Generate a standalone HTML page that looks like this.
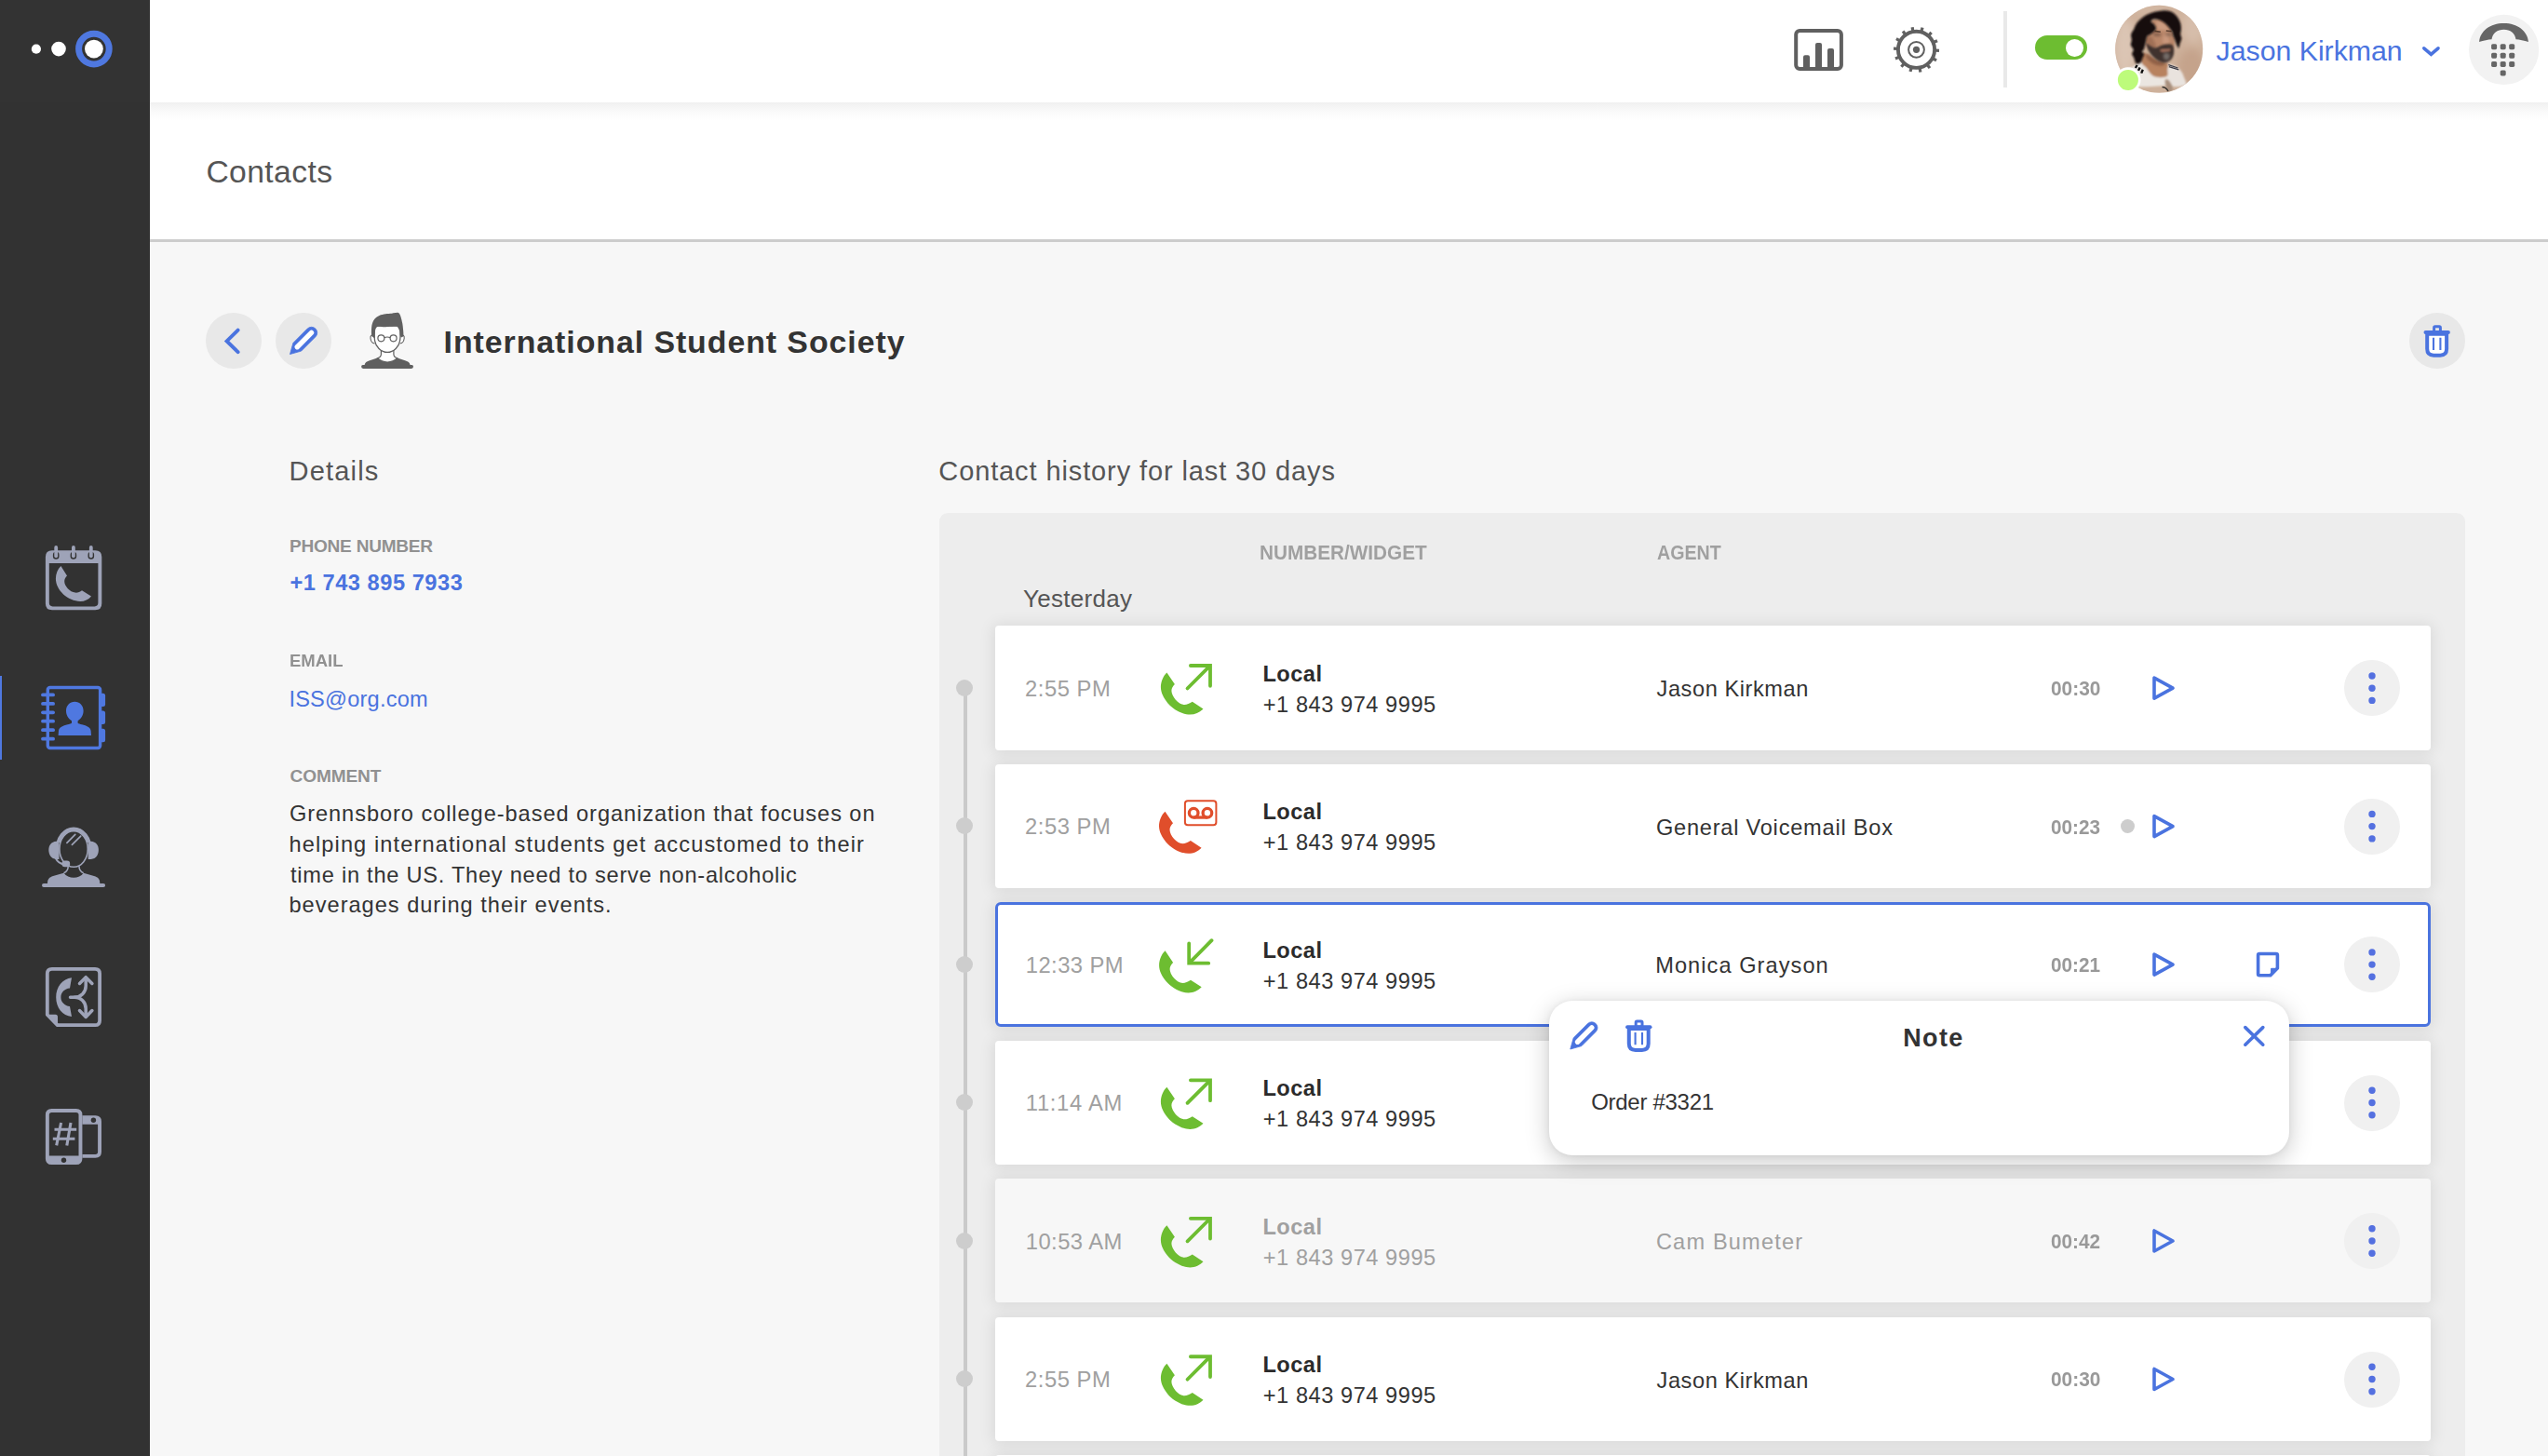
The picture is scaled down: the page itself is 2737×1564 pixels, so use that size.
<!DOCTYPE html>
<html lang="en"><head><meta charset="utf-8"><title>Contacts</title><style>
html,body{margin:0;padding:0}
html{width:2737px;height:1564px;overflow:hidden;background:#f7f7f7}
body{width:2737px;height:1564px;overflow:hidden;position:relative;background:#f7f7f7;font-family:"Liberation Sans",sans-serif}
#root{position:absolute;left:0;top:0;width:2737px;height:1564px;overflow:hidden;background:#f7f7f7}
.a{position:absolute;display:block}
.t{position:absolute;white-space:nowrap;line-height:1}
.cbtn{width:60px;height:60px;border-radius:50%;background:#e8e8e8}
.more{width:60px;height:60px;border-radius:50%;background:#f0f0f0}
.card{background:#fff;border-radius:4px;box-shadow:0 1px 16px 3px rgba(0,0,0,.08)}
.card.sel{box-sizing:border-box;border:3px solid #4a73df;border-radius:6px}
.card.dis{background:#f7f7f7}
</style></head><body><div id="root">
<div class="a" style="left:0;top:0;width:161px;height:1564px;background:#333"></div>
<div class="a" style="left:0;top:110px;width:161px;height:1454px;background:#323232"></div>
<svg class="a" style="left:20px;top:20px" width="120" height="66" viewBox="20 20 120 66" ><circle cx="38.9" cy="52.7" r="5.1" fill="#fff"/><circle cx="63" cy="52.6" r="7.8" fill="#fff"/><circle cx="100.9" cy="52.6" r="16.3" fill="none" stroke="#4f78e0" stroke-width="7"/><circle cx="100.9" cy="52.6" r="9.9" fill="#fff"/></svg>
<div class="a" style="left:0;top:726px;width:2px;height:90px;background:#4f78e0"></div>
<svg class="a" style="left:40px;top:580px" width="80" height="80" viewBox="40 580 80 80" ><g fill="#9ea3b8"><path fill-rule="evenodd" d="M56,591.3 L102.3,591.3 Q109.3,591.3 109.3,598.3 L109.3,648.2 Q109.3,655.2 102.3,655.2 L56,655.2 Q48.9,655.2 48.9,648.2 L48.9,598.3 Q48.9,591.3 56,591.3 Z M52.8,605 L52.8,647.6 Q52.8,651.4 56.6,651.4 L101.6,651.4 Q105.4,651.4 105.4,647.6 L105.4,605 Z"/><path d="M65.4,608.1 C62,611.5 59.9,616.5 59.9,621.5 C59.9,634 73,645.9 86.3,645.9 C91,645.9 95,644 98,640.4 L88,634.2 C86,635.8 83.5,636.8 80.8,636.6 C75,636 69.2,629.5 69.2,624.5 C69.2,622 70.3,620.2 72,618.4 Z"/></g><path d="M60.2,596 L60.2,597.5" stroke="#333" stroke-width="6.6" stroke-linecap="round" fill="none"/><path d="M60.2,588 L60.2,597.3" stroke="#9ea3b8" stroke-width="3.8" stroke-linecap="round" fill="none"/><path d="M78.9,596 L78.9,597.5" stroke="#333" stroke-width="6.6" stroke-linecap="round" fill="none"/><path d="M78.9,588 L78.9,597.3" stroke="#9ea3b8" stroke-width="3.8" stroke-linecap="round" fill="none"/><path d="M97.8,596 L97.8,597.5" stroke="#333" stroke-width="6.6" stroke-linecap="round" fill="none"/><path d="M97.8,588 L97.8,597.3" stroke="#9ea3b8" stroke-width="3.8" stroke-linecap="round" fill="none"/></svg>
<svg class="a" style="left:40px;top:730px" width="80" height="80" viewBox="40 730 80 80" ><rect x="51.3" y="738.5" width="56.3" height="65" rx="2.5" fill="none" stroke="#4f78e0" stroke-width="3.4"/><path d="M46,746.4 L57.1,746.4" stroke="#4f78e0" stroke-width="3.8" stroke-linecap="round"/><path d="M46,755.9 L57.1,755.9" stroke="#4f78e0" stroke-width="3.8" stroke-linecap="round"/><path d="M46,765.3 L57.1,765.3" stroke="#4f78e0" stroke-width="3.8" stroke-linecap="round"/><path d="M46,774.7 L57.1,774.7" stroke="#4f78e0" stroke-width="3.8" stroke-linecap="round"/><path d="M46,784.2 L57.1,784.2" stroke="#4f78e0" stroke-width="3.8" stroke-linecap="round"/><path d="M46,793.7 L57.1,793.7" stroke="#4f78e0" stroke-width="3.8" stroke-linecap="round"/><path d="M109,744.7 L110.6,744.7 Q113.1,744.7 113.1,747.2 L113.1,756.6 Q113.1,759.1 110.6,759.1 L109,759.1 Z" fill="#4f78e0"/><path d="M109,763.6 L110.6,763.6 Q113.1,763.6 113.1,766.1 L113.1,775.5 Q113.1,778.0 110.6,778.0 L109,778.0 Z" fill="#4f78e0"/><path d="M109,782.8 L110.6,782.8 Q113.1,782.8 113.1,785.3 L113.1,794.6999999999999 Q113.1,797.1999999999999 110.6,797.1999999999999 L109,797.1999999999999 Z" fill="#4f78e0"/><path fill="#4f78e0" d="M80.3,753.8 C85.5,753.8 89.6,758 89.6,763.5 C89.6,768 87.3,772 83.6,774.3 L83.6,776.8 C84.5,777.5 86,777.9 88,778.3 C93,779.4 97.2,781.5 97.6,785 L98,790 L62.6,790 L63,785 C63.4,781.5 67.6,779.4 72.6,778.3 C74.6,777.9 76.1,777.5 77,776.8 L77,774.3 C73.3,772 71,768 71,763.5 C71,758 75.1,753.8 80.3,753.8 Z"/></svg>
<svg class="a" style="left:40px;top:880px" width="80" height="80" viewBox="40 880 80 80" ><g fill="#9ea3b8"><path d="M45,951 Q45,949 47,949 L51,949 C51,944 53,942.5 57,941 L68.5,937.7 C71,941 75,942.8 79.1,942.8 C83.2,942.8 87.5,941 89.7,937.7 L101,941 C105.5,942.5 107.3,944 107.3,949 L111,949 Q113.1,949 113.1,951 Q113.1,953.1 111,953.1 L47,953.1 Q45,953.1 45,951 Z"/><path d="M52.3,913 C52.3,908 55,904 60.5,903.7 L63.5,903.7 L63.5,922.9 L60.5,922.9 C55,922.5 52.3,918 52.3,913 Z"/><path d="M105.9,913 C105.9,908 103.2,904 97.7,903.7 L94.7,903.7 L94.7,922.9 L97.7,922.9 C103.2,922.5 105.9,918 105.9,913 Z"/><rect x="66.4" y="924.6" width="8.8" height="6.6" rx="3.3"/></g><g fill="none" stroke="#9ea3b8"><clipPath id="hb"><rect x="40" y="880" width="80" height="25"/></clipPath><ellipse cx="79.1" cy="912" rx="17.3" ry="21.4" stroke-width="4.4" clip-path="url(#hb)"/><ellipse cx="79.1" cy="912" rx="15.2" ry="19.3" stroke-width="1.6"/><path d="M59.5,921.5 C61.5,925.5 64.5,928 69,928.5" stroke-width="1.8"/><path d="M73.2,930.5 C73.2,934 71.5,936.5 68.5,937.7 M85,930.5 C85,934 86.7,936.5 89.7,937.7" stroke-width="1.6"/><path d="M71.9,905.4 L80.8,896.4 M77.4,907.4 L86.7,898.2" stroke-width="1.7" stroke-linecap="round"/></g></svg>
<svg class="a" style="left:40px;top:1030px" width="80" height="80" viewBox="40 1030 80 80" ><path d="M55.8,1040.8 L102.1,1040.8 Q107.1,1040.8 107.1,1045.8 L107.1,1096.2 Q107.1,1101.2 102.1,1101.2 L61.7,1101.2 L50.8,1090 L50.8,1045.8 Q50.8,1040.8 55.8,1040.8 Z" fill="none" stroke="#9ea3b8" stroke-width="3.8" stroke-linejoin="round"/><path d="M51.5,1089.7 L59.5,1089.7 Q62,1089.7 62,1092.2 L62,1100.8 Z" fill="#9ea3b8"/><path fill="#9ea3b8" d="M77,1050.2 C67,1051.5 60.2,1060 60.2,1071.2 C60.2,1082.4 67,1090.8 77,1092.1 L75,1081.1 C69.5,1080.2 65.4,1076.5 65.4,1071.2 C65.4,1065.9 69.5,1062.2 75,1061.6 Z"/><g fill="none" stroke="#9ea3b8" stroke-width="3.5" stroke-linecap="round" stroke-linejoin="round"><path d="M75.5,1071.2 L80,1071.2 C87,1071.2 92.2,1066 92.2,1059 L92.2,1051.5"/><path d="M80,1071.2 C87,1071.2 92.2,1076.4 92.2,1083.4 L92.2,1091"/><path d="M85.5,1056.4 L92.2,1049.7 L98.9,1056.4"/><path d="M85.5,1085.6 L92.2,1092.4 L98.9,1085.6"/></g></svg>
<svg class="a" style="left:40px;top:1185px" width="80" height="80" viewBox="40 1185 80 80" ><g fill="#9ea3b8"><path fill-rule="evenodd" d="M55.5,1190.9 L81.8,1190.9 Q88.4,1190.9 88.4,1197.5 L88.4,1244.4 Q88.4,1251 81.8,1251 L55.5,1251 Q48.9,1251 48.9,1244.4 L48.9,1197.5 Q48.9,1190.9 55.5,1190.9 Z M52.8,1197.6 L52.8,1241.4 L84.5,1241.4 L84.5,1197.6 Q84.5,1194.9 81.8,1194.9 L55.5,1194.9 Q52.8,1194.9 52.8,1197.6 Z"/><path fill-rule="evenodd" d="M88.4,1198.2 L102.5,1198.2 Q109,1198.2 109,1204.7 L109,1237.3 Q109,1243.8 102.5,1243.8 L88.4,1243.8 L88.4,1240 L102.4,1240 Q105.1,1240 105.1,1237.3 L105.1,1207.8 L88.4,1207.8 Z"/></g><circle cx="68.5" cy="1246.2" r="2.7" fill="#323232"/><circle cx="100.4" cy="1203.3" r="2.7" fill="#323232"/><g stroke="#9ea3b8" stroke-width="3.1" fill="none"><path d="M65.6,1206 L60.7,1230.4 M76,1206 L71.8,1230.4 M58.5,1213.3 L82.2,1213.3 M56.8,1223.2 L80.4,1223.2"/></g></svg>
<div class="a" style="left:161px;top:0;width:2576px;height:110px;background:#fff"></div>
<div class="a" style="left:161px;top:110px;width:2576px;height:147px;background:linear-gradient(#f0f0f0 0px,#f5f5f5 5px,#fbfbfb 11px,#fff 19px)"></div>
<div class="a" style="left:161px;top:257px;width:2576px;height:2.5px;background:#cdcdcd"></div>
<svg class="a" style="left:1920px;top:25px" width="70" height="60" viewBox="1920 25 70 60" ><rect x="1929.2" y="32.9" width="48.7" height="41.2" rx="4" fill="none" stroke="#606060" stroke-width="4"/><g fill="#606060"><path d="M1937,72.5 L1937,61.2 Q1937,59.2 1939,59.2 L1942,59.2 Q1944,59.2 1944,61.2 L1944,72.5 Z"/><path d="M1950,72.5 L1950,48.1 Q1950,46.1 1952,46.1 L1955,46.1 Q1957,46.1 1957,48.1 L1957,72.5 Z"/><path d="M1963,72.5 L1963,53.9 Q1963,51.9 1965,51.9 L1968,51.9 Q1970,51.9 1970,53.9 L1970,72.5 Z"/></g></svg>
<svg class="a" style="left:2030px;top:25px" width="60" height="60" viewBox="2030 25 60 60" ><g fill="none" stroke="#606060"><circle cx="2058.5" cy="53.3" r="19.6" stroke-width="3.9"/><g stroke-width="3.2"><path d="M2078.98,54.22 L2082.98,54.40"/><path d="M2076.55,63.02 L2080.07,64.91"/><path d="M2070.55,69.89 L2072.90,73.12"/><path d="M2062.16,73.47 L2062.87,77.41"/><path d="M2053.04,73.06 L2051.98,76.92"/><path d="M2045.01,68.74 L2042.38,71.75"/><path d="M2039.65,61.35 L2035.97,62.93"/><path d="M2038.02,52.38 L2034.02,52.20"/><path d="M2040.45,43.58 L2036.93,41.69"/><path d="M2046.45,36.71 L2044.10,33.48"/><path d="M2054.84,33.13 L2054.13,29.19"/><path d="M2063.96,33.54 L2065.02,29.68"/><path d="M2071.99,37.86 L2074.62,34.85"/><path d="M2077.35,45.25 L2081.03,43.67"/></g><circle cx="2058.5" cy="53.3" r="8.4" stroke-width="2"/></g><circle cx="2058.5" cy="53.3" r="3.6" fill="#606060"/></svg>
<div class="a" style="left:2152px;top:12px;width:4px;height:82px;background:#e9e9e9"></div>
<div class="a" style="left:2186px;top:38px;width:56px;height:26.4px;border-radius:14px;background:#6dbd31"></div><div class="a" style="left:2219.1px;top:41.9px;width:18.8px;height:18.8px;border-radius:50%;background:#fff"></div>
<svg class="a" style="left:2265px;top:0px" width="110" height="110" viewBox="2265 0 110 110" ><defs><clipPath id="avc"><circle cx="2319.2" cy="52.8" r="47"/></clipPath><filter id="b1" x="-20%" y="-20%" width="140%" height="140%"><feGaussianBlur stdDeviation="0.9"/></filter><filter id="b2" x="-20%" y="-20%" width="140%" height="140%"><feGaussianBlur stdDeviation="0.7"/></filter><filter id="b4" x="-30%" y="-30%" width="160%" height="160%"><feGaussianBlur stdDeviation="1.8"/></filter><filter id="b3" x="-30%" y="-30%" width="160%" height="160%"><feGaussianBlur stdDeviation="4"/></filter></defs><g clip-path="url(#avc)"><rect x="2270" y="4" width="98" height="98" fill="#ceb19b"/><g filter="url(#b3)"><ellipse cx="2283" cy="50" rx="12" ry="30" fill="#dbc5b4"/><ellipse cx="2356" cy="28" rx="12" ry="18" fill="#d6bdaa"/><ellipse cx="2354" cy="72" rx="14" ry="20" fill="#c5a38b"/><ellipse cx="2310" cy="10" rx="20" ry="6" fill="#d2b7a3"/></g><g filter="url(#b1)"><path d="M2291.2,71.5 C2295.2,69.7 2297.3,66.7 2298.9,66.0 C2300.6,65.4 2299.7,66.5 2301.1,67.7 C2302.5,68.9 2305.5,71.4 2307.6,73.0 C2309.7,74.6 2311.8,75.8 2313.8,77.3 C2315.8,78.8 2317.4,81.3 2319.6,82.1 C2321.9,82.9 2326.2,80.5 2327.3,82.1 C2328.4,83.7 2335.0,90.1 2326.3,91.7 C2317.7,93.3 2283.9,94.1 2275.4,91.7 C2266.9,89.3 2272.7,80.7 2275.4,77.3 C2278.0,73.9 2287.3,73.4 2291.2,71.5 Z" fill="#ebe6e1"/><path d="M2329.0,68.9 C2329.8,68.3 2331.5,69.6 2333.1,70.1 C2334.6,70.6 2336.8,71.0 2338.4,72.0 C2340.0,73.1 2341.5,74.7 2342.7,76.3 C2343.9,78.0 2344.9,79.6 2345.6,82.1 C2346.3,84.7 2350.2,90.1 2347.0,91.7 C2343.8,93.3 2329.6,93.7 2326.3,91.7 C2323.1,89.7 2327.0,82.7 2327.3,79.7 C2327.6,76.7 2328.0,75.7 2328.3,73.9 C2328.5,72.1 2328.2,69.5 2329.0,68.9 Z" fill="#e9e3de"/><path d="M2300.9,57.6 C2301.9,56.1 2304.8,57.4 2306.6,58.1 C2308.5,58.8 2309.9,60.6 2311.9,61.9 C2313.9,63.2 2316.2,64.8 2318.7,65.8 C2321.1,66.7 2324.6,67.1 2326.3,67.7 C2328.1,68.3 2328.9,68.1 2329.2,69.1 C2329.6,70.2 2328.6,71.8 2328.3,73.9 C2327.9,76.1 2329.7,80.8 2327.3,82.1 C2324.9,83.5 2317.5,83.7 2313.8,82.1 C2310.2,80.5 2307.4,75.0 2305.2,72.5 C2302.9,70.0 2301.1,69.7 2300.4,67.2 C2299.7,64.7 2299.8,59.1 2300.9,57.6 Z" fill="#b8825f"/></g><g filter="url(#b4)"><path d="M2305.2,58.1 C2306.0,57.8 2309.7,60.6 2311.9,61.9 C2314.2,63.2 2316.2,64.8 2318.7,65.8 C2321.1,66.7 2325.9,66.9 2326.3,67.7 C2326.8,68.5 2323.6,70.4 2321.5,70.6 C2319.5,70.7 2316.2,69.8 2313.8,68.7 C2311.4,67.5 2308.6,65.6 2307.1,63.8 C2305.7,62.1 2304.4,58.4 2305.2,58.1 Z" fill="#8d5d45"/></g><g filter="url(#b1)"><path d="M2311.0,22.5 C2311.9,21.7 2316.2,20.5 2318.7,20.8 C2321.1,21.1 2323.9,22.7 2325.9,24.2 C2327.9,25.7 2329.3,27.8 2330.7,30.0 C2332.0,32.1 2333.1,34.6 2334.0,36.9 C2335.0,39.2 2336.0,41.6 2336.2,43.7 C2336.4,45.7 2335.8,47.8 2335.2,49.4 C2334.7,51.0 2335.8,52.5 2333.1,53.3 C2330.3,54.1 2323.1,55.0 2318.7,54.2 C2314.2,53.4 2308.9,50.6 2306.6,48.5 C2304.4,46.3 2305.0,43.2 2305.2,41.2 C2305.4,39.3 2306.6,38.3 2308.1,36.9 C2309.5,35.6 2312.5,34.4 2313.8,33.1 C2315.2,31.8 2316.2,30.5 2316.0,29.2 C2315.8,27.9 2313.7,26.5 2312.9,25.4 C2312.0,24.3 2310.0,23.3 2311.0,22.5 Z" fill="#b98669"/></g><g filter="url(#b4)"><path d="M2315.8,23.0 C2316.6,22.3 2319.6,22.3 2321.5,23.0 C2323.5,23.7 2325.9,25.7 2327.3,27.3 C2328.8,28.9 2330.8,31.7 2330.2,32.6 C2329.6,33.5 2325.5,32.8 2323.5,32.6 C2321.4,32.4 2318.8,32.0 2317.7,31.2 C2316.6,30.3 2317.1,28.7 2316.7,27.3 C2316.4,25.9 2315.0,23.7 2315.8,23.0 Z" fill="#cb9b80"/><path d="M2324.9,36.9 C2325.7,35.6 2326.9,35.8 2327.8,36.9 C2328.7,38.0 2330.0,42.0 2330.2,43.7 C2330.4,45.3 2330.2,46.5 2329.2,47.0 C2328.3,47.6 2325.5,47.4 2324.4,47.0 C2323.4,46.6 2322.9,46.3 2323.0,44.6 C2323.1,42.9 2324.1,38.2 2324.9,36.9 Z" fill="#c9977c"/><path d="M2305.7,40.8 C2306.2,39.0 2308.6,38.4 2310.0,38.8 C2311.4,39.3 2312.9,41.9 2313.8,43.7 C2314.8,45.4 2316.1,47.8 2315.8,49.4 C2315.4,51.0 2313.4,53.3 2311.9,53.3 C2310.4,53.3 2307.7,51.5 2306.6,49.4 C2305.6,47.3 2305.1,42.5 2305.7,40.8 Z" fill="#a07057"/><path d="M2313.4,35.5 C2314.1,35.0 2316.3,34.9 2317.7,35.0 C2319.1,35.1 2321.1,35.6 2321.5,36.2 C2322.0,36.8 2321.5,38.4 2320.6,38.8 C2319.6,39.3 2317.0,39.2 2315.8,39.1 C2314.5,38.9 2313.5,38.5 2313.1,37.9 C2312.7,37.3 2312.6,36.0 2313.4,35.5 Z" fill="#8a6350"/><path d="M2326.3,36.0 C2327.0,35.4 2329.0,35.0 2330.2,35.0 C2331.4,35.0 2333.1,35.6 2333.6,36.2 C2334.0,36.8 2334.0,38.4 2333.1,38.8 C2332.2,39.3 2329.4,39.2 2328.3,39.1 C2327.1,39.0 2326.4,38.6 2326.1,38.1 C2325.8,37.6 2325.7,36.5 2326.3,36.0 Z" fill="#94705c"/></g><g filter="url(#b1)"><path d="M2305.7,46.5 C2306.1,45.8 2308.5,48.6 2310.0,49.4 C2311.5,50.2 2313.4,51.2 2314.8,51.3 C2316.2,51.5 2316.9,50.9 2318.2,50.4 C2319.5,49.9 2320.8,48.9 2322.5,48.5 C2324.2,48.0 2326.5,47.6 2328.3,47.5 C2330.0,47.4 2332.0,47.3 2333.1,48.0 C2334.2,48.6 2334.4,50.0 2334.8,51.3 C2335.1,52.7 2335.4,54.6 2335.2,56.2 C2335.1,57.8 2334.7,59.5 2334.0,61.0 C2333.4,62.4 2332.3,63.8 2331.2,64.8 C2330.0,65.8 2328.8,66.6 2327.3,67.0 C2325.9,67.3 2324.3,67.4 2322.5,67.0 C2320.7,66.5 2318.6,65.6 2316.7,64.3 C2314.9,63.1 2313.0,61.3 2311.4,59.5 C2309.9,57.8 2308.6,55.9 2307.6,53.8 C2306.6,51.6 2305.3,47.3 2305.7,46.5 Z" fill="#3f332d"/><path d="M2320.3,53.5 C2320.9,53.0 2324.0,52.9 2325.9,52.8 C2327.7,52.6 2330.8,52.2 2331.4,52.5 C2332.0,52.9 2331.2,54.4 2329.7,55.0 C2328.2,55.5 2324.1,55.9 2322.5,55.7 C2320.9,55.4 2319.8,54.0 2320.3,53.5 Z" fill="#a46f5b"/></g><g filter="url(#b4)"><path d="M2324.4,57.6 C2325.1,56.8 2327.2,56.6 2328.3,56.9 C2329.3,57.1 2330.4,58.0 2330.7,59.0 C2330.9,60.1 2330.5,62.5 2329.7,63.4 C2328.9,64.2 2326.8,64.6 2325.9,64.3 C2324.9,64.0 2324.2,62.6 2323.9,61.4 C2323.7,60.3 2323.7,58.4 2324.4,57.6 Z" fill="#746c67"/></g><g filter="url(#b1)"><path d="M2294.6,68.2 C2293.4,67.3 2293.0,63.6 2292.2,61.9 C2291.5,60.2 2290.1,59.5 2290.0,58.1 C2290.0,56.6 2291.9,54.9 2291.7,53.3 C2291.5,51.7 2289.2,50.2 2288.8,48.5 C2288.5,46.7 2289.8,44.6 2289.8,42.7 C2289.8,40.8 2288.7,38.8 2289.1,36.9 C2289.5,35.0 2291.3,33.0 2292.2,31.2 C2293.1,29.3 2293.4,27.6 2294.6,25.9 C2295.8,24.1 2297.7,22.2 2299.4,20.6 C2301.2,19.0 2303.1,17.5 2305.2,16.2 C2307.3,15.0 2309.7,14.1 2311.9,13.4 C2314.2,12.6 2316.3,12.3 2318.7,11.9 C2321.0,11.6 2323.5,11.2 2325.9,11.3 C2328.3,11.5 2331.2,12.1 2333.1,12.9 C2335.0,13.7 2336.0,15.0 2337.2,16.2 C2338.4,17.5 2339.4,19.0 2340.3,20.6 C2341.2,22.2 2342.0,24.0 2342.5,25.9 C2342.9,27.7 2343.0,29.8 2342.9,31.6 C2342.9,33.5 2342.1,35.3 2342.2,36.9 C2342.3,38.5 2343.5,39.6 2343.4,41.2 C2343.3,42.9 2342.3,44.8 2341.7,46.5 C2341.2,48.3 2340.9,51.4 2340.3,51.6 C2339.6,51.7 2338.6,49.0 2337.9,47.5 C2337.2,46.0 2336.8,44.1 2336.2,42.7 C2335.6,41.2 2335.0,40.3 2334.5,38.8 C2334.0,37.4 2333.9,35.6 2333.1,34.0 C2332.3,32.4 2331.1,30.8 2329.7,29.2 C2328.3,27.6 2326.6,25.7 2324.9,24.4 C2323.2,23.1 2321.5,22.2 2319.6,21.5 C2317.8,20.9 2315.4,20.3 2313.8,20.6 C2312.3,20.8 2310.5,22.1 2310.5,23.0 C2310.5,23.9 2312.9,24.7 2313.8,25.9 C2314.8,27.1 2316.0,28.8 2316.0,30.2 C2316.0,31.6 2314.8,32.9 2313.8,34.0 C2312.8,35.2 2311.2,36.1 2310.0,36.9 C2308.8,37.7 2307.4,37.7 2306.6,38.8 C2305.8,40.0 2305.6,42.1 2305.2,43.7 C2304.8,45.3 2304.6,46.9 2304.2,48.5 C2303.8,50.1 2303.3,52.1 2302.8,53.3 C2302.2,54.5 2300.8,54.9 2300.9,55.7 C2300.9,56.5 2303.2,56.9 2303.3,58.1 C2303.3,59.3 2302.0,61.4 2301.3,62.9 C2300.7,64.4 2300.5,66.3 2299.4,67.2 C2298.3,68.1 2295.8,69.1 2294.6,68.2 Z" fill="#18100e"/><path d="M2325.8,86.3 C2326.2,84.9 2327.9,85.1 2329.1,85.9 C2330.2,86.7 2331.9,89.2 2332.7,91.0 C2333.5,92.8 2334.3,95.5 2333.8,96.8 C2333.3,98.2 2330.9,99.5 2329.8,99.0 C2328.6,98.5 2327.5,96.0 2326.9,93.9 C2326.2,91.8 2325.4,87.6 2325.8,86.3 Z" fill="#a88f7d"/></g><g filter="url(#b2)" fill="none"><path d="M2314.5,33.4 L2320.8,34.2 M2326.8,33 L2332.6,33.8" stroke="#3a261e" stroke-width="1.6" opacity="0.75"/><path d="M2295.6,70 L2293.9,73 M2298.6,72.4 L2297,75.8 M2301.8,74.8 L2300.2,78.6" stroke="#0c0c0c" stroke-width="2.4"/><path d="M2329.4,69.6 L2339.5,73 M2329.8,71.6 L2340.3,74.9" stroke="#3c3c46" stroke-width="1.2"/><path d="M2322.5,93.5 C2325,93.5 2327.5,95 2329,98" stroke="#3a3530" stroke-width="1.6"/></g></g><circle cx="2285.9" cy="85.9" r="13.6" fill="#fff"/><circle cx="2285.9" cy="85.9" r="11" fill="#bdfb7b"/></svg>
<svg class="a" style="left:2595px;top:40px" width="32" height="28" viewBox="2595 40 32 28" ><path d="M2603.8,51.8 L2611.4,58.4 L2619,51.8" fill="none" stroke="#4a73df" stroke-width="3.6" stroke-linecap="round" stroke-linejoin="miter"/></svg>
<svg class="a" style="left:2650px;top:14px" width="80" height="80" viewBox="2650 14 80 80" ><circle cx="2689.6" cy="53.4" r="37.6" fill="#f2f2f2"/><g fill="#666"><path d="M2663.1,45.1 C2664,33 2675,24.9 2689.6,24.9 C2704,24.9 2715,33 2716,45.1 C2711,43.5 2706.5,42.5 2702.5,42.3 C2701.5,35.5 2696.5,31.7 2689.6,31.7 C2682.5,31.7 2677.5,35.5 2676.5,42.3 C2672.5,42.5 2668,43.5 2663.1,45.1 Z"/><rect x="2676.1" y="47.2" width="6" height="6" rx="1.6"/><rect x="2676.1" y="56.7" width="6" height="6" rx="1.6"/><rect x="2676.1" y="65.9" width="6" height="6" rx="1.6"/><rect x="2685.7" y="47.2" width="6" height="6" rx="1.6"/><rect x="2685.7" y="56.7" width="6" height="6" rx="1.6"/><rect x="2685.7" y="65.9" width="6" height="6" rx="1.6"/><rect x="2695.2" y="47.2" width="6" height="6" rx="1.6"/><rect x="2695.2" y="56.7" width="6" height="6" rx="1.6"/><rect x="2695.2" y="65.9" width="6" height="6" rx="1.6"/><rect x="2685.7" y="75.4" width="6" height="6" rx="1.6"/></g></svg>
<div class="a cbtn" style="left:221px;top:336px"></div><div class="a cbtn" style="left:296px;top:336px"></div><div class="a cbtn" style="left:2588px;top:336px"></div>
<svg class="a" style="left:236px;top:346px" width="30" height="40" viewBox="236 346 30 40" ><path d="M255.6,354.6 L243.6,366.4 L255.6,378.2" fill="none" stroke="#4a73df" stroke-width="3.9" stroke-linecap="round" stroke-linejoin="miter"/></svg>
<svg class="a" style="left:300px;top:340px" width="52" height="52" viewBox="300 340 52 52" ><g transform="translate(326 366)"><path d="M-14.50,14.50 L-11.10,2.40 L4.20,-12.90 A6.15,6.15 0 0 1 12.90,-4.20 L-2.40,11.10 Z" fill="#4a73df" stroke="#4a73df" stroke-width="0.8" stroke-linejoin="round"/><path d="M8.55,-8.55 L-6.75,6.75" stroke="#fff" stroke-width="5.4" stroke-linecap="round" fill="none"/></g></svg>
<svg class="a" style="left:2598px;top:340px" width="40" height="52" viewBox="2598 340 40 52" ><g transform="translate(0 0)" fill="none" stroke="#4a73df"><rect x="2614.6" y="350.8" width="6.8" height="6" rx="1.2" stroke-width="3"/><path d="M2607.2,358.8 L2607.2,374.8 Q2607.2,381.7 2614.2,381.7 L2621.2,381.7 Q2628.1,381.7 2628.1,374.8 L2628.1,358.8 Z" fill="#fff" stroke-width="4"/><path d="M2605.5,357 L2629.9,357" stroke-width="4" stroke-linecap="round"/><path d="M2614,362.8 L2614,376 M2621.4,362.8 L2621.4,376" stroke-width="2.1"/></g></svg>
<svg class="a" style="left:384px;top:332px" width="64" height="68" viewBox="384 332 64 68" ><g fill="#606060"><path d="M388.1,393.8 Q388.1,392.2 389.8,392.1 L391.6,392 C392.2,389.5 393.8,388.4 396.4,387.6 L407.6,383.8 L424.6,383.8 L435.8,387.6 C438.4,388.4 440,389.5 440.6,392 L442.4,392.1 Q444,392.2 444,393.8 Q444,395.9 442,395.9 L390.1,395.9 Q388.1,395.9 388.1,393.8 Z"/></g><path d="M409.4,376 L409.4,380.5 C409.4,382.6 408,384 405.6,384.8 C408.5,387.6 412,389 416.1,389 C420.2,389 423.8,387.6 426.7,384.8 C424.3,384 422.9,382.6 422.9,380.5 L422.9,376 Z" fill="#fff" stroke="#606060" stroke-width="1.2"/><path d="M402.2,360.4 C399.5,359 397.6,360.5 398,363.5 C398.4,366.5 400,368.8 402.6,369" fill="#fff" stroke="#606060" stroke-width="1.1"/><path d="M430,360.4 C432.7,359 434.6,360.5 434.2,363.5 C433.8,366.5 432.2,368.8 429.6,369" fill="#fff" stroke="#606060" stroke-width="1.1"/><path d="M402.4,350 C402,356 402,362 402.6,366 C403.5,372 409,378.4 416.1,378.4 C423.2,378.4 428.7,372 429.6,366 C430.2,362 430.2,356 429.8,350 Z" fill="#fff" stroke="#606060" stroke-width="1.3"/><path d="M399.23,360.16 C398.91,358.88 398.86,356.68 398.96,354.67 C399.05,352.66 399.18,350.09 399.78,348.08 C400.38,346.06 401.25,344.09 402.53,342.58 C403.81,341.07 405.55,339.88 407.47,339.01 C409.40,338.14 411.87,337.73 414.07,337.36 C416.26,337.00 419.01,337.02 420.66,336.81 C422.31,336.60 422.95,336.28 423.96,336.10 C424.96,335.92 425.88,335.60 426.70,335.71 C427.53,335.83 428.26,336.03 428.90,336.81 C429.54,337.59 430.00,338.69 430.55,340.38 C431.10,342.08 431.79,344.78 432.20,346.98 C432.61,349.18 432.84,351.37 433.02,353.57 C433.21,355.77 433.57,358.70 433.30,360.16 C433.02,361.63 431.97,362.36 431.37,362.36 C430.78,362.36 430.09,361.26 429.73,360.16 C429.36,359.07 429.50,357.05 429.18,355.77 C428.86,354.49 428.40,353.34 427.80,352.47 C427.21,351.60 427.16,350.82 425.60,350.55 C424.05,350.27 420.57,350.69 418.46,350.82 C416.36,350.96 414.98,351.37 412.97,351.37 C410.95,351.37 407.93,350.55 406.37,350.82 C404.82,351.10 404.22,351.83 403.63,353.02 C403.03,354.21 402.99,356.32 402.80,357.97 C402.62,359.62 402.85,362.18 402.53,362.91 C402.21,363.64 401.43,362.82 400.88,362.36 C400.33,361.90 399.55,361.45 399.23,360.16 Z" fill="#606060"/><g fill="none" stroke="#606060" stroke-width="1.2"><circle cx="409.4" cy="363.3" r="3.5"/><circle cx="422.6" cy="363.3" r="3.5"/><path d="M412.9,362.6 Q416,361.4 419.1,362.6"/></g></svg>
<div class="a" style="left:1009px;top:551px;width:1639px;height:1013px;border-radius:9px 9px 0 0;background:#ededed"></div>
<div class="a" style="left:1035px;top:738px;width:4px;height:826px;background:#cacaca"></div>
<div class="a card" style="left:1069px;top:672.3px;width:1542px;height:133.3px"></div>
<div class="a" style="left:1027px;top:729.8px;width:18px;height:18px;border-radius:50%;background:#cdcdcd"></div>
<svg class="a" style="left:1240px;top:702px" width="70" height="70" viewBox="1240 702 70 70" ><g fill="#6dbd31"><path transform="translate(0 0.0)" d="M1253.4,722.4 C1249.5,726 1247,732 1246.9,738.1 C1246.9,744 1250,750 1254.3,755.2 C1260,762 1270,767.6 1278.4,767.6 C1284,767.6 1289,765 1292.5,761.4 L1280.8,753.8 C1278,755.6 1275,757 1272.2,757 C1266,757 1258.4,748 1258.4,742 C1258.4,739 1260,737 1261.9,735 Z"/></g><g fill="none" stroke="#6dbd31" stroke-width="3.8" stroke-linecap="round" transform="translate(0 0.0)"><path d="M1275.5,739.5 L1299.3,715.7"/><path d="M1278.9,715 L1300,715 L1300,736.8" stroke-linejoin="miter"/></g></svg>
<svg class="a" style="left:2305px;top:719px" width="40" height="40" viewBox="2305 719 40 40" ><path d="M2314,728.2 L2314,750.2 L2334,739.2 Z" fill="none" stroke="#4a73df" stroke-width="3.6" stroke-linejoin="round"/></svg>
<div class="a more" style="left:2518px;top:709.2px"></div><svg class="a" style="left:2538px;top:719px" width="20" height="40" viewBox="2538 719 20 40" ><g fill="#5470e0"><circle cx="2548" cy="726.0" r="3.7"/><circle cx="2548" cy="739.2" r="3.7"/><circle cx="2548" cy="752.4" r="3.7"/></g></svg>
<div class="a card" style="left:1069px;top:820.8px;width:1542px;height:133.3px"></div>
<div class="a" style="left:1027px;top:878.2px;width:18px;height:18px;border-radius:50%;background:#cdcdcd"></div>
<svg class="a" style="left:1240px;top:851px" width="70" height="70" viewBox="1240 851 70 70" ><g fill="#e04e2b"><path transform="translate(-1.9 149.25000000000006)" d="M1253.4,722.4 C1249.5,726 1247,732 1246.9,738.1 C1246.9,744 1250,750 1254.3,755.2 C1260,762 1270,767.6 1278.4,767.6 C1284,767.6 1289,765 1292.5,761.4 L1280.8,753.8 C1278,755.6 1275,757 1272.2,757 C1266,757 1258.4,748 1258.4,742 C1258.4,739 1260,737 1261.9,735 Z"/></g><g fill="none" stroke="#e04e2b" transform="translate(0 -0.25)"><rect x="1272.9" y="860.6" width="33.5" height="25.8" rx="3" stroke-width="2"/><circle cx="1282.2" cy="873.5" r="4.8" stroke-width="3.3"/><circle cx="1296.9" cy="873.5" r="4.8" stroke-width="3.3"/><path d="M1282.2,878.3 L1296.9,878.3" stroke-width="3.3"/></g></svg>
<svg class="a" style="left:2305px;top:868px" width="40" height="40" viewBox="2305 868 40 40" ><path d="M2314,876.6 L2314,898.6 L2334,887.6 Z" fill="none" stroke="#4a73df" stroke-width="3.6" stroke-linejoin="round"/></svg>
<div class="a" style="left:2278px;top:879.8px;width:15px;height:15px;border-radius:50%;background:#cdcdcd"></div>
<div class="a more" style="left:2518px;top:857.6px"></div><svg class="a" style="left:2538px;top:868px" width="20" height="40" viewBox="2538 868 20 40" ><g fill="#5470e0"><circle cx="2548" cy="874.4" r="3.7"/><circle cx="2548" cy="887.6" r="3.7"/><circle cx="2548" cy="900.9" r="3.7"/></g></svg>
<div class="a card sel" style="left:1069px;top:969px;width:1542px;height:134px"></div>
<div class="a" style="left:1027px;top:1026.7px;width:18px;height:18px;border-radius:50%;background:#cdcdcd"></div>
<svg class="a" style="left:1240px;top:999px" width="70" height="70" viewBox="1240 999 70 70" ><g fill="#6dbd31"><path transform="translate(-1.8 298.9)" d="M1253.4,722.4 C1249.5,726 1247,732 1246.9,738.1 C1246.9,744 1250,750 1254.3,755.2 C1260,762 1270,767.6 1278.4,767.6 C1284,767.6 1289,765 1292.5,761.4 L1280.8,753.8 C1278,755.6 1275,757 1272.2,757 C1266,757 1258.4,748 1258.4,742 C1258.4,739 1260,737 1261.9,735 Z"/></g><g fill="none" stroke="#6dbd31" stroke-width="3.8" stroke-linecap="round" transform="translate(0 969.1999999999999)"><path d="M1301.5,41 L1278.3,64.4"/><path d="M1277.2,44.2 L1277.2,65.5 L1298.2,65.5" stroke-linejoin="miter"/></g></svg>
<svg class="a" style="left:2305px;top:1016px" width="40" height="40" viewBox="2305 1016 40 40" ><path d="M2314,1025.1 L2314,1047.1 L2334,1036.1 Z" fill="none" stroke="#4a73df" stroke-width="3.6" stroke-linejoin="round"/></svg>
<svg class="a" style="left:2415px;top:1016px" width="40" height="40" viewBox="2415 1016 40 40" ><path d="M2427.1,1024.5 L2444.9,1024.5 Q2446.4,1024.5 2446.4,1026.0 L2446.4,1040.1 L2438.8,1047.6999999999998 L2427.1,1047.6999999999998 Q2425.6,1047.6999999999998 2425.6,1046.1999999999998 L2425.6,1026.0 Q2425.6,1024.5 2427.1,1024.5 Z" fill="none" stroke="#4a73df" stroke-width="3.6" stroke-linejoin="round"/><path d="M2439.6,1047.1 L2439.6,1040.2999999999997 L2446.4,1040.2999999999997 Z" fill="#4a73df" stroke="#4a73df" stroke-width="1" stroke-linejoin="round"/></svg>
<div class="a more" style="left:2518px;top:1006.1px"></div><svg class="a" style="left:2538px;top:1016px" width="20" height="40" viewBox="2538 1016 20 40" ><g fill="#5470e0"><circle cx="2548" cy="1022.9" r="3.7"/><circle cx="2548" cy="1036.1" r="3.7"/><circle cx="2548" cy="1049.3" r="3.7"/></g></svg>
<div class="a card" style="left:1069px;top:1117.6px;width:1542px;height:133.3px"></div>
<div class="a" style="left:1027px;top:1175.1px;width:18px;height:18px;border-radius:50%;background:#cdcdcd"></div>
<svg class="a" style="left:1240px;top:1148px" width="70" height="70" viewBox="1240 1148 70 70" ><g fill="#6dbd31"><path transform="translate(0 445.3499999999999)" d="M1253.4,722.4 C1249.5,726 1247,732 1246.9,738.1 C1246.9,744 1250,750 1254.3,755.2 C1260,762 1270,767.6 1278.4,767.6 C1284,767.6 1289,765 1292.5,761.4 L1280.8,753.8 C1278,755.6 1275,757 1272.2,757 C1266,757 1258.4,748 1258.4,742 C1258.4,739 1260,737 1261.9,735 Z"/></g><g fill="none" stroke="#6dbd31" stroke-width="3.8" stroke-linecap="round" transform="translate(0 445.3499999999999)"><path d="M1275.5,739.5 L1299.3,715.7"/><path d="M1278.9,715 L1300,715 L1300,736.8" stroke-linejoin="miter"/></g></svg>
<div class="a more" style="left:2518px;top:1154.5px"></div><svg class="a" style="left:2538px;top:1165px" width="20" height="40" viewBox="2538 1165 20 40" ><g fill="#5470e0"><circle cx="2548" cy="1171.3" r="3.7"/><circle cx="2548" cy="1184.5" r="3.7"/><circle cx="2548" cy="1197.8" r="3.7"/></g></svg>
<div class="a card dis" style="left:1069px;top:1266.1px;width:1542px;height:133.3px"></div>
<div class="a" style="left:1027px;top:1323.6px;width:18px;height:18px;border-radius:50%;background:#cdcdcd"></div>
<svg class="a" style="left:1240px;top:1296px" width="70" height="70" viewBox="1240 1296 70 70" ><g fill="#6dbd31"><path transform="translate(0 593.8)" d="M1253.4,722.4 C1249.5,726 1247,732 1246.9,738.1 C1246.9,744 1250,750 1254.3,755.2 C1260,762 1270,767.6 1278.4,767.6 C1284,767.6 1289,765 1292.5,761.4 L1280.8,753.8 C1278,755.6 1275,757 1272.2,757 C1266,757 1258.4,748 1258.4,742 C1258.4,739 1260,737 1261.9,735 Z"/></g><g fill="none" stroke="#6dbd31" stroke-width="3.8" stroke-linecap="round" transform="translate(0 593.8)"><path d="M1275.5,739.5 L1299.3,715.7"/><path d="M1278.9,715 L1300,715 L1300,736.8" stroke-linejoin="miter"/></g></svg>
<svg class="a" style="left:2305px;top:1313px" width="40" height="40" viewBox="2305 1313 40 40" ><path d="M2314,1322.0 L2314,1344.0 L2334,1333.0 Z" fill="none" stroke="#4a73df" stroke-width="3.6" stroke-linejoin="round"/></svg>
<div class="a more" style="left:2518px;top:1303.0px"></div><svg class="a" style="left:2538px;top:1313px" width="20" height="40" viewBox="2538 1313 20 40" ><g fill="#5470e0"><circle cx="2548" cy="1319.8" r="3.7"/><circle cx="2548" cy="1333.0" r="3.7"/><circle cx="2548" cy="1346.2" r="3.7"/></g></svg>
<div class="a card" style="left:1069px;top:1414.5px;width:1542px;height:133.3px"></div>
<div class="a" style="left:1027px;top:1472.0px;width:18px;height:18px;border-radius:50%;background:#cdcdcd"></div>
<svg class="a" style="left:1240px;top:1445px" width="70" height="70" viewBox="1240 1445 70 70" ><g fill="#6dbd31"><path transform="translate(0 742.25)" d="M1253.4,722.4 C1249.5,726 1247,732 1246.9,738.1 C1246.9,744 1250,750 1254.3,755.2 C1260,762 1270,767.6 1278.4,767.6 C1284,767.6 1289,765 1292.5,761.4 L1280.8,753.8 C1278,755.6 1275,757 1272.2,757 C1266,757 1258.4,748 1258.4,742 C1258.4,739 1260,737 1261.9,735 Z"/></g><g fill="none" stroke="#6dbd31" stroke-width="3.8" stroke-linecap="round" transform="translate(0 742.25)"><path d="M1275.5,739.5 L1299.3,715.7"/><path d="M1278.9,715 L1300,715 L1300,736.8" stroke-linejoin="miter"/></g></svg>
<svg class="a" style="left:2305px;top:1461px" width="40" height="40" viewBox="2305 1461 40 40" ><path d="M2314,1470.5 L2314,1492.5 L2334,1481.5 Z" fill="none" stroke="#4a73df" stroke-width="3.6" stroke-linejoin="round"/></svg>
<div class="a more" style="left:2518px;top:1451.5px"></div><svg class="a" style="left:2538px;top:1461px" width="20" height="40" viewBox="2538 1461 20 40" ><g fill="#5470e0"><circle cx="2548" cy="1468.2" r="3.7"/><circle cx="2548" cy="1481.5" r="3.7"/><circle cx="2548" cy="1494.7" r="3.7"/></g></svg>
<div class="a card" style="left:1069px;top:1563.0px;width:1542px;height:133.3px"></div>
<div class="t" style="left:221.4px;top:168px;font-size:33.7px;font-weight:400;color:#555;letter-spacing:0.378px">Contacts</div>
<div class="t" style="left:2380.6px;top:40px;font-size:30.3px;font-weight:400;color:#4a73df;letter-spacing:-0.027px">Jason Kirkman</div>
<div class="t" style="left:476.6px;top:351px;font-size:33.9px;font-weight:700;color:#333;letter-spacing:0.929px">International Student Society</div>
<div class="t" style="left:310.6px;top:492px;font-size:29.1px;font-weight:400;color:#555;letter-spacing:1.139px">Details</div>
<div class="t" style="left:311.0px;top:577px;font-size:19.1px;font-weight:700;color:#919191;letter-spacing:-0.263px">PHONE NUMBER</div>
<div class="t" style="left:311.5px;top:615px;font-size:23.6px;font-weight:700;color:#4a73df;letter-spacing:0.535px">+1 743 895 7933</div>
<div class="t" style="left:311.0px;top:700px;font-size:19.1px;font-weight:700;color:#919191;transform-origin:0 0;transform:scaleX(0.9690)">EMAIL</div>
<div class="t" style="left:310.4px;top:740px;font-size:23.6px;font-weight:400;color:#4a73df;letter-spacing:0.202px">ISS@org.com</div>
<div class="t" style="left:311.6px;top:824px;font-size:19.1px;font-weight:700;color:#919191;letter-spacing:-0.141px">COMMENT</div>
<div class="t" style="left:310.9px;top:863px;font-size:23.6px;font-weight:400;color:#333;letter-spacing:0.941px">Grennsboro college-based organization that focuses on</div>
<div class="t" style="left:310.5px;top:896px;font-size:23.6px;font-weight:400;color:#333;letter-spacing:1.108px">helping international students get accustomed to their</div>
<div class="t" style="left:312.0px;top:929px;font-size:23.6px;font-weight:400;color:#333;letter-spacing:0.753px">time in the US. They need to serve non-alcoholic</div>
<div class="t" style="left:310.5px;top:961px;font-size:23.6px;font-weight:400;color:#333;letter-spacing:0.991px">beverages during their events.</div>
<div class="t" style="left:1008.3px;top:492px;font-size:29px;font-weight:400;color:#555;letter-spacing:0.888px">Contact history for last 30 days</div>
<div class="t" style="left:1353.4px;top:584px;font-size:21.4px;font-weight:700;color:#a0a0a0;transform-origin:0 0;transform:scaleX(0.9691)">NUMBER/WIDGET</div>
<div class="t" style="left:1779.9px;top:584px;font-size:21.4px;font-weight:700;color:#a0a0a0;transform-origin:0 0;transform:scaleX(0.9177)">AGENT</div>
<div class="t" style="left:1099.1px;top:630px;font-size:26px;font-weight:400;color:#555;letter-spacing:0.279px">Yesterday</div>
<div class="t" style="left:1101.1px;top:728px;font-size:23.8px;font-weight:400;color:#a0a0a0;letter-spacing:0.498px">2:55 PM</div>
<div class="t" style="left:1356.4px;top:713px;font-size:23.6px;font-weight:700;color:#2b2b2b;letter-spacing:0.508px">Local</div>
<div class="t" style="left:1356.8px;top:746px;font-size:23.6px;font-weight:400;color:#333;letter-spacing:0.545px">+1 843 974 9995</div>
<div class="t" style="left:1779.6px;top:729px;font-size:23.6px;font-weight:400;color:#333;letter-spacing:0.551px">Jason Kirkman</div>
<div class="t" style="left:2202.8px;top:729px;font-size:21.9px;font-weight:700;color:#999;transform-origin:0 0;transform:scaleX(0.9533)">00:30</div>
<div class="t" style="left:1101.1px;top:876px;font-size:23.8px;font-weight:400;color:#a0a0a0;letter-spacing:0.498px">2:53 PM</div>
<div class="t" style="left:1356.4px;top:861px;font-size:23.6px;font-weight:700;color:#2b2b2b;letter-spacing:0.508px">Local</div>
<div class="t" style="left:1356.8px;top:894px;font-size:23.6px;font-weight:400;color:#333;letter-spacing:0.545px">+1 843 974 9995</div>
<div class="t" style="left:1778.9px;top:878px;font-size:23.6px;font-weight:400;color:#333;letter-spacing:0.768px">General Voicemail Box</div>
<div class="t" style="left:2202.9px;top:878px;font-size:21.9px;font-weight:700;color:#999;transform-origin:0 0;transform:scaleX(0.9474)">00:23</div>
<div class="t" style="left:1101.8px;top:1025px;font-size:23.8px;font-weight:400;color:#a0a0a0;letter-spacing:0.417px">12:33 PM</div>
<div class="t" style="left:1356.4px;top:1010px;font-size:23.6px;font-weight:700;color:#2b2b2b;letter-spacing:0.508px">Local</div>
<div class="t" style="left:1356.8px;top:1043px;font-size:23.6px;font-weight:400;color:#333;letter-spacing:0.545px">+1 843 974 9995</div>
<div class="t" style="left:1778.2px;top:1026px;font-size:23.6px;font-weight:400;color:#333;letter-spacing:1.057px">Monica Grayson</div>
<div class="t" style="left:2202.9px;top:1026px;font-size:21.9px;font-weight:700;color:#999;transform-origin:0 0;transform:scaleX(0.9474)">00:21</div>
<div class="t" style="left:1101.8px;top:1173px;font-size:23.8px;font-weight:400;color:#a0a0a0;letter-spacing:0.670px">11:14 AM</div>
<div class="t" style="left:1356.4px;top:1158px;font-size:23.6px;font-weight:700;color:#2b2b2b;letter-spacing:0.508px">Local</div>
<div class="t" style="left:1356.8px;top:1191px;font-size:23.6px;font-weight:400;color:#333;letter-spacing:0.545px">+1 843 974 9995</div>
<div class="t" style="left:1101.8px;top:1322px;font-size:23.8px;font-weight:400;color:#a0a0a0;letter-spacing:0.417px">10:53 AM</div>
<div class="t" style="left:1356.4px;top:1307px;font-size:23.6px;font-weight:700;color:#a0a0a0;letter-spacing:0.508px">Local</div>
<div class="t" style="left:1356.8px;top:1340px;font-size:23.6px;font-weight:400;color:#a0a0a0;letter-spacing:0.545px">+1 843 974 9995</div>
<div class="t" style="left:1778.9px;top:1323px;font-size:23.6px;font-weight:400;color:#a0a0a0;letter-spacing:1.165px">Cam Bumeter</div>
<div class="t" style="left:2202.9px;top:1323px;font-size:21.9px;font-weight:700;color:#999;transform-origin:0 0;transform:scaleX(0.9474)">00:42</div>
<div class="t" style="left:1101.1px;top:1470px;font-size:23.8px;font-weight:400;color:#a0a0a0;letter-spacing:0.498px">2:55 PM</div>
<div class="t" style="left:1356.4px;top:1455px;font-size:23.6px;font-weight:700;color:#2b2b2b;letter-spacing:0.508px">Local</div>
<div class="t" style="left:1356.8px;top:1488px;font-size:23.6px;font-weight:400;color:#333;letter-spacing:0.545px">+1 843 974 9995</div>
<div class="t" style="left:1779.6px;top:1472px;font-size:23.6px;font-weight:400;color:#333;letter-spacing:0.551px">Jason Kirkman</div>
<div class="t" style="left:2202.8px;top:1471px;font-size:21.9px;font-weight:700;color:#999;transform-origin:0 0;transform:scaleX(0.9533)">00:30</div>
<div class="a" style="left:1664px;top:1075px;width:795px;height:166px;border-radius:25px;background:#fff;box-shadow:0 6px 26px rgba(0,0,0,.22),0 0 6px rgba(0,0,0,.05)"></div>
<svg class="a" style="left:1676px;top:1086px" width="52" height="52" viewBox="1676 1086 52 52" ><g transform="translate(1701.3 1112.5)"><path d="M-14.50,14.50 L-11.10,2.40 L4.20,-12.90 A6.15,6.15 0 0 1 12.90,-4.20 L-2.40,11.10 Z" fill="#4a73df" stroke="#4a73df" stroke-width="0.8" stroke-linejoin="round"/><path d="M8.55,-8.55 L-6.75,6.75" stroke="#fff" stroke-width="5.4" stroke-linecap="round" fill="none"/></g></svg>
<svg class="a" style="left:1740px;top:1090px" width="42" height="46" viewBox="1740 1090 42 46" ><g transform="translate(-857.4000000000001 746.3)" fill="none" stroke="#4a73df"><rect x="2614.6" y="350.8" width="6.8" height="6" rx="1.2" stroke-width="3"/><path d="M2607.2,358.8 L2607.2,374.8 Q2607.2,381.7 2614.2,381.7 L2621.2,381.7 Q2628.1,381.7 2628.1,374.8 L2628.1,358.8 Z" fill="none" stroke-width="4"/><path d="M2605.5,357 L2629.9,357" stroke-width="4" stroke-linecap="round"/><path d="M2614,362.8 L2614,376 M2621.4,362.8 L2621.4,376" stroke-width="2.1"/></g></svg>
<svg class="a" style="left:2404px;top:1096px" width="34" height="34" viewBox="2404 1096 34 34" ><path d="M2411.8,1103.6 L2430.8,1122.2 M2430.8,1103.6 L2411.8,1122.2" fill="none" stroke="#4a73df" stroke-width="3.6" stroke-linecap="round"/></svg>
<div class="t" style="left:2044.2px;top:1102px;font-size:27px;font-weight:700;color:#333;letter-spacing:1.387px">Note</div>
<div class="t" style="left:1709.2px;top:1172px;font-size:24px;font-weight:400;color:#333;letter-spacing:-0.286px">Order #3321</div>
</div></body></html>
